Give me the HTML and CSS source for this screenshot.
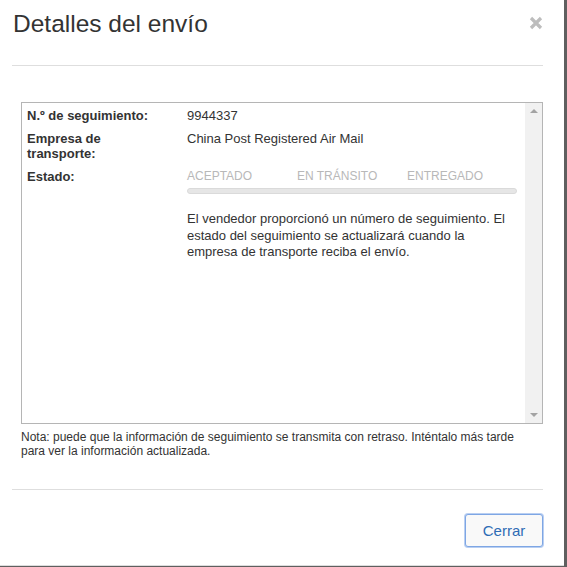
FILE: index.html
```html
<!DOCTYPE html>
<html lang="es">
<head>
<meta charset="utf-8">
<title>Detalles del envío</title>
<link rel="stylesheet" href="styles.css">
</head>
<body>
<div class="modal">
  <div class="header">
    <h1 class="title">Detalles del envío</h1>
    <span class="close" aria-label="Cerrar">
      <svg width="14" height="14" viewBox="0 0 14 14"><path d="M2 2 L12 12 M12 2 L2 12" stroke="#bdbdbd" stroke-width="3.2" stroke-linecap="butt"/></svg>
    </span>
  </div>
  <div class="content">
    <div class="box">
      <div class="box-inner">
        <div class="row">
          <div class="label">N.º de seguimiento:</div>
          <div class="value">9944337</div>
        </div>
        <div class="row">
          <div class="label">Empresa de<br>transporte:</div>
          <div class="value">China Post Registered Air Mail</div>
        </div>
        <div class="row">
          <div class="label">Estado:</div>
          <div class="value">
            <div class="steps">
              <span class="step">ACEPTADO</span>
              <span class="step">EN TRÁNSITO</span>
              <span class="step">ENTREGADO</span>
            </div>
            <div class="bar"></div>
            <p class="desc">El vendedor proporcionó un número de seguimiento. El estado del seguimiento se actualizará cuando la empresa de transporte reciba el envío.</p>
          </div>
        </div>
      </div>
      <div class="scrollbar">
        <span class="arrow up"></span>
        <span class="arrow down"></span>
      </div>
    </div>
    <p class="note">Nota: puede que la información de seguimiento se transmita con retraso. Inténtalo más tarde para ver la información actualizada.</p>
  </div>
  <div class="footer">
    <button class="btn">Cerrar</button>
  </div>
</div>
</body>
</html>
```
FILE: styles.css
```css
html, body {
  margin: 0;
  padding: 0;
}
body {
  background: #5f5f5f;
  font-family: "Liberation Sans", Arial, sans-serif;
  color: #333;
}
.modal {
  width: 564px;
  height: 566px;
  box-sizing: border-box;
  background: #fff;
  border-bottom: 1px solid #dcdcdc;
  padding: 0 21px 0 12px;
  display: flex;
  flex-direction: column;
}
.header {
  height: 66px;
  box-sizing: border-box;
  border-bottom: 1px solid #dedede;
  display: flex;
  justify-content: space-between;
  align-items: flex-start;
  padding: 9px 0 0 1px;
}
.title {
  margin: 0;
  font-size: 24.5px;
  line-height: 30px;
  font-weight: normal;
  color: #333;
}
.close {
  display: block;
  margin-top: 7px;
  width: 14px;
  height: 14px;
}
.close svg { display: block; }
.content {
  padding: 36px 0 0 9px;
  height: 423px;
  box-sizing: border-box;
}
.box {
  height: 322px;
  box-sizing: border-box;
  border: 1px solid #b5b5b5;
  display: flex;
}
.box-inner {
  flex: 1;
  padding: 5px 0 0 5px;
  font-size: 13px;
  line-height: 15px;
}
.row {
  display: flex;
  margin-bottom: 8px;
}
.label {
  width: 160px;
  font-weight: bold;
  flex: none;
}
.value {
  width: 330px;
}
.steps {
  display: flex;
  color: #b8b8b8;
  font-size: 12px;
}
.step {
  width: 110px;
}
.bar {
  margin-top: 4px;
  height: 6px;
  border-radius: 4px;
  background: #e6e6e6;
  border: 1px solid #dadada;
  box-sizing: border-box;
}
.desc {
  margin: 17px 0 0;
  line-height: 16.5px;
  color: #333;
}
.scrollbar {
  width: 17px;
  background: #f1f1f1;
  display: flex;
  flex-direction: column;
  justify-content: space-between;
  align-items: center;
  padding: 6px 0;
  box-sizing: border-box;
}
.arrow {
  width: 0;
  height: 0;
  border-left: 4px solid transparent;
  border-right: 4px solid transparent;
}
.arrow.up { border-bottom: 4px solid #a3a3a3; }
.arrow.down { border-top: 4px solid #a3a3a3; }
.note {
  margin: 6px 0 0;
  width: 505px;
  font-size: 12px;
  line-height: 14px;
  color: #333;
}
.footer {
  border-top: 1px solid #dedede;
  padding-top: 24px;
  display: flex;
  justify-content: flex-end;
}
.btn {
  width: 78px;
  height: 33px;
  border: 1px solid #7ea6e4;
  box-shadow: 0 0 0 1px #b9cff2;
  border-radius: 3px;
  background: #f9f9f9;
  color: #2f6cb5;
  font-family: "Liberation Sans", Arial, sans-serif;
  font-size: 15px;
  padding: 0;
  margin: 0;
}
```
